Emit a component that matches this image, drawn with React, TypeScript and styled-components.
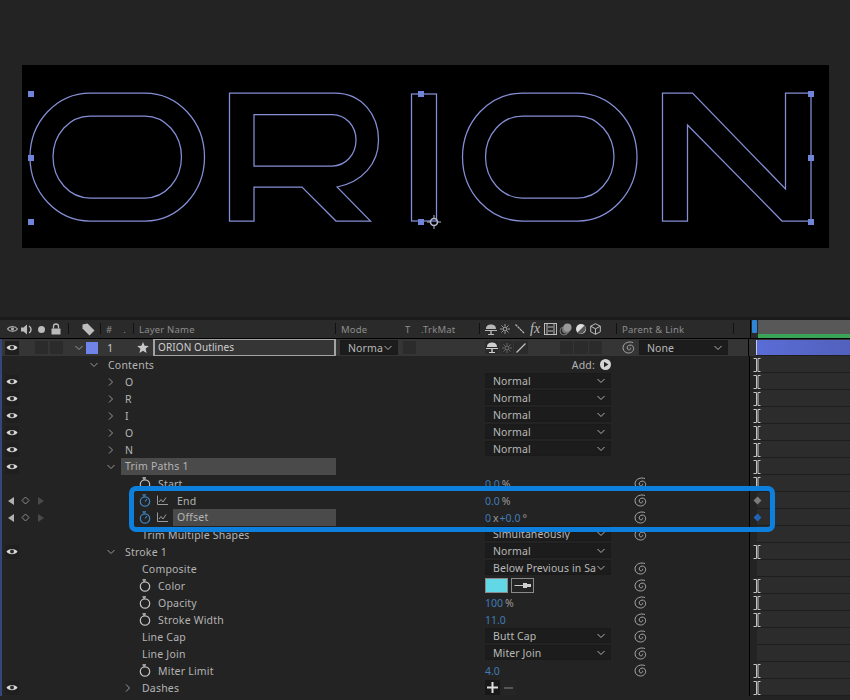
import React from 'react';
import styled, { createGlobalStyle } from 'styled-components';

const GlobalStyle = createGlobalStyle`
  html, body {
    margin: 0;
    padding: 0;
    background: #232323;
  }
`;

const Page = styled.div`
  display: flex;
  flex-direction: column;
  width: 850px;
  height: 700px;
  overflow: hidden;
  background: #232323;
  color: #b4b4b4;
  font-family: 'Noto Sans', sans-serif;
  font-size: 10.5px;
  letter-spacing: 0.2px;
`;

/* composition viewer */
const Viewer = styled.section`
  flex: none;
  height: 317px;
  padding: 65px 21px 0 22px;
  box-sizing: border-box;
`;
const CompFrame = styled.svg`
  display: block;
  width: 807px;
  height: 183px;
  background: #000;
`;

/* timeline */
const Timeline = styled.section`
  position: relative;
  flex: 1;
  border-top: 3px solid #1b1b1b;
  min-height: 0;
`;
const Header = styled.div`
  display: flex;
  height: 18px;
  background: #2a2a2a;
  border-bottom: 1px solid #000;
  color: #8d8d8d;
  font-size: 9.5px;
`;
const HeadCell = styled.div<{ $width: number; $pad?: number; $gap?: number; $rule?: boolean }>`
  flex: none;
  display: flex;
  align-items: center;
  box-sizing: border-box;
  width: ${(p) => p.$width}px;
  padding-left: ${(p) => p.$pad ?? 5}px;
  gap: ${(p) => p.$gap ?? 0}px;
  white-space: nowrap;
  position: relative;

  ${(p) =>
    p.$rule &&
    `&::after {
      content: '';
      position: absolute;
      right: 0;
      top: 3px;
      bottom: 4px;
      width: 1px;
      background: #111;
    }`}
`;
const HeadRuler = styled.div`
  flex: 1;
  display: flex;
  align-items: stretch;
  border-left: 1px solid #000;
  margin-left: 16px;
  flex-direction: column;
  position: relative;
  padding-left: 7px;
`;
const RulerGray = styled.div`
  flex: 1;
  background: #585858;
`;
const RulerGreen = styled.div`
  height: 4px;
  background: #3aa558;
`;
const PlayHead = styled.div`
  position: absolute;
  left: 1px;
  top: 0;
  width: 5px;
  height: 13px;
  background: #2f86d8;
  border-radius: 1px;
`;

const Rows = styled.div`
  border-left: 2px solid #33477a;
`;
const LayerRowBox = styled.div`
  display: flex;
  align-items: center;
  height: 17px;
  background: #353535;
`;
const EyeBox = styled.div`
  flex: none;
  display: flex;
  align-items: center;
  justify-content: center;
  width: 14px;
  height: 14px;
  margin-left: 3px;
  background: #1f1f1f;
`;
const DarkSquare = styled.div<{ $left?: number; $width?: number }>`
  flex: none;
  width: ${(p) => p.$width ?? 13}px;
  height: 13px;
  margin-left: ${(p) => p.$left ?? 2}px;
  background: #2b2b2b;
  display: flex;
  align-items: center;
  justify-content: center;
`;
const Swatch = styled.div`
  flex: none;
  width: 12px;
  height: 12px;
  margin-left: 3px;
  background: #6f83e8;
`;
const LayerIndex = styled.div`
  flex: none;
  width: 39px;
  padding-left: 9px;
  box-sizing: border-box;
  font-size: 11px;
  color: #c4c4c4;
`;
const NameInput = styled.div`
  flex: none;
  width: 183px;
  height: 17px;
  margin-left: 4px;
  padding-left: 3px;
  box-sizing: border-box;
  border: 2px solid #a3a3a3;
  border-top-width: 1px;
  border-bottom-width: 1px;
  color: #cfcfcf;
  line-height: 15px;
  font-size: 10px;
  letter-spacing: 0.1px;
`;
const Select = styled.div<{ $width?: number; $left?: number }>`
  flex: none;
  display: flex;
  align-items: center;
  justify-content: space-between;
  box-sizing: border-box;
  width: ${(p) => p.$width ?? 126}px;
  height: 15px;
  margin-left: ${(p) => p.$left ?? 0}px;
  margin-bottom: 2px;
  padding: 0 5px 0 7px;
  background: #1c1c1c;
  border: 1px solid #1a1a1a;
  color: #b8b8b8;
  white-space: nowrap;
  overflow: hidden;
  letter-spacing: 0.1px;
`;
const LayerSelect = styled(Select)`
  margin-bottom: 0;
`;

const Row = styled.div`
  display: grid;
  grid-template-columns: 83px 251px 149px 149px 115px 1fr;
  height: 17px;
  align-items: center;
`;
const SwitchCell = styled.div`
  display: flex;
  align-items: center;
  height: 17px;
`;
const NavCell = styled.div`
  display: flex;
  align-items: center;
  margin-left: 6px;
  gap: 7px;
`;
const TreeCell = styled.div<{ $indent: number }>`
  display: flex;
  align-items: center;
  height: 17px;
  padding-left: ${(p) => p.$indent}px;
  white-space: nowrap;
`;
const ChevronSlot = styled.div`
  flex: none;
  display: flex;
  width: 18px;
`;
const WatchSlot = styled.div`
  flex: none;
  display: flex;
  width: 12px;
  margin-right: 7px;
`;
const GraphSlot = styled.div`
  flex: none;
  display: flex;
  width: 11px;
  margin: 0 9px 0 -1px;
`;
const Label = styled.div<{ $selected?: boolean }>`
  ${(p) =>
    p.$selected &&
    `flex: 1;
    margin-left: -4px;
    padding-left: 4px;
    background: #4a4a4a;
    line-height: 17px;`}
`;
const ValueCell = styled.div`
  display: flex;
  align-items: center;
  height: 17px;
`;
const AddCell = styled(ValueCell)`
  justify-content: flex-end;
  gap: 5px;
  padding-right: 23px;
`;
const Blue = styled.span`
  color: #3f7cb8;
  font-size: 10.5px;
  letter-spacing: 0;
`;
const Unit = styled.span`
  color: #9a9a9a;
  margin: 0 1px 0 2px;
  letter-spacing: 0;
`;
const ColorChip = styled.div`
  width: 23px;
  height: 15px;
  box-sizing: border-box;
  background: #62d8e6;
  border: 1px solid #8a8a8a;
`;
const DropperChip = styled.div`
  width: 23px;
  height: 15px;
  margin-left: 3px;
  box-sizing: border-box;
  border: 1px solid #8a8a8a;
  background: #242424;
  display: flex;
  align-items: center;
  justify-content: center;
`;
const SmallButton = styled.div<{ $dim?: boolean }>`
  display: flex;
  align-items: center;
  justify-content: center;
  width: 15px;
  height: 15px;
  margin-right: 1px;
  background: ${(p) => (p.$dim ? '#252525' : '#181818')};
`;
const LinkCell = styled.div`
  display: flex;
  align-items: center;
  height: 17px;
`;
const TrackCell = styled.div<{ $layer?: boolean }>`
  position: relative;
  display: flex;
  align-items: center;
  height: 17px;
  padding-left: 3px;
  border-left: 1px solid #000;
  background: ${(p) =>
    p.$layer ? '#333333' : 'linear-gradient(to right, #232323 7px, #2c2c2c 7px)'};

  &::after {
    content: '';
    position: absolute;
    left: 7px;
    right: 0;
    bottom: 0;
    height: 1px;
    background: #1e1e1e;
  }
`;
const LayerTrack = styled.div`
  align-self: stretch;
  flex: 1;
  display: flex;
  margin-left: 4px;
  padding: 1px 0;
`;
const LayerBar = styled.div`
  flex: 1;
  background: linear-gradient(to right, #5a6cd6, #5261bd);
  border-left: 1px solid #c3c9ea;
`;
const Callout = styled.div`
  position: absolute;
  left: 129px;
  top: 166px;
  width: 646px;
  height: 46px;
  box-sizing: border-box;
  border: 5px solid #0c80dc;
  border-radius: 7px;
`;

/* drawn icons */
const Eye = () => (
  <svg width="12" height="9" viewBox="0 0 12 9">
    <path d="M0.5 4.5C2.5 1 9.5 1 11.5 4.5 9.5 8 2.5 8 0.5 4.5Z" fill="#d8d8d8" />
    <circle cx="6" cy="4.5" r="2" fill="#2a2a2a" />
  </svg>
);
const Chevron = ({ open, color = '#999' }: { open?: boolean; color?: string }) => (
  <svg width="8" height="8" viewBox="0 0 8 8" fill="none" stroke={color} strokeWidth="1">
    <path d={open ? 'M0.5 2L4 5.5 7.5 2' : 'M2 0.5L5.5 4 2 7.5'} />
  </svg>
);
const Stopwatch = ({ on }: { on?: boolean }) => (
  <svg width="12" height="13" viewBox="0 0 12 13" fill="none" stroke={on ? '#3f83bd' : '#c4c4c4'} strokeWidth="1.2">
    <circle cx="6" cy="7.5" r="4.7" />
    <path d="M3.5 0.8H7M5 1V3" />
    {on && <path d="M6 7.5L8 5" />}
  </svg>
);
const Graph = () => (
  <svg width="11" height="11" viewBox="0 0 11 11" fill="none" stroke="#a8a8a8" strokeWidth="0.9">
    <path d="M0.5 0.5V9.5H11" />
    <path d="M2 7L4 4.5 6 7 9 2.5" />
  </svg>
);
const Spiral = () => (
  <svg width="13" height="13" viewBox="0 0 13 13" fill="none" stroke="#a6a6a6" strokeWidth="1">
    <path d="M11 1.6C7.5 0 1 1.6 1 6.8 1 10.4 4 12 6.6 12 9.8 12 12 9.6 11.6 6.8 11.2 4.2 8.4 3.4 6.4 4.6 4.6 5.8 4.8 8.6 6.8 8.9 8.2 9 9 7.8 8.5 6.8" />
  </svg>
);
const Tick = () => (
  <svg width="8" height="14" viewBox="0 0 8 14" fill="none" stroke="#c4c4c4" strokeWidth="1">
    <path d="M0.5 0.5H3.5V13.5H0.5M7.5 0.5H5V13.5H7.5" />
  </svg>
);
const Key = ({ blue }: { blue?: boolean }) => (
  <svg width="9" height="9" viewBox="0 0 9 9">
    <path d="M4.5 0.5L8.5 4.5 4.5 8.5 0.5 4.5Z" fill={blue ? '#2164b4' : '#7a7a7a'} />
  </svg>
);
const NavArrows = () => (
  <NavCell>
    <svg width="6" height="8" viewBox="0 0 6 8">
      <path d="M6 0V8L0 4Z" fill="#b0b0b0" />
    </svg>
    <svg width="9" height="9" viewBox="0 0 9 9" fill="none" stroke="#8c8c8c">
      <path d="M4.5 1L8 4.5 4.5 8 1 4.5Z" />
    </svg>
    <svg width="6" height="8" viewBox="0 0 6 8" style={{ marginLeft: 1 }}>
      <path d="M0 0V8L6 4Z" fill="#4a4a4a" />
    </svg>
  </NavCell>
);
const Star = () => (
  <svg width="12" height="11" viewBox="0 0 12 11">
    <path d="M6 0L7.6 3.8 11.8 4.1 8.6 6.8 9.6 11 6 8.8 2.4 11 3.4 6.8 0.2 4.1 4.4 3.8Z" fill="#c9c9c9" />
  </svg>
);
const PlayCircle = () => (
  <svg width="11" height="11" viewBox="0 0 11 11">
    <circle cx="5.5" cy="5.5" r="5.5" fill="#d4d4d4" />
    <path d="M4 2.8V8.2L8.4 5.5Z" fill="#222" />
  </svg>
);
const Dropper = () => (
  <svg width="18" height="7" viewBox="0 0 18 7" fill="none">
    <path d="M0.5 3.5H9" stroke="#c8c8c8" />
    <path d="M9 1H13V2H17V5H13V6H9Z" fill="#cfcfcf" />
  </svg>
);
const ShyIcon = ({ color = '#b6b6b6' }: { color?: string }) => (
  <svg width="12" height="11" viewBox="0 0 12 11" fill={color}>
    <path d="M1 5C1 1.5 3.5 0.5 6 0.5S11 1.5 11 5ZM0 6H12V7H0ZM5.3 7H6.7V10H9V11H3V10H5.3Z" />
  </svg>
);
const SunIcon = ({ color = '#b6b6b6' }: { color?: string }) => (
  <svg width="10" height="10" viewBox="0 0 10 10" fill="none" stroke={color}>
    <circle cx="5" cy="5" r="2" />
    <path d="M5 0V2M5 8V10M0 5H2M8 5H10M1.5 1.5L3 3M7 7L8.5 8.5M1.5 8.5L3 7M7 3L8.5 1.5" strokeWidth="0.8" />
  </svg>
);

const FxMark = styled.span`
  font-family: 'Liberation Serif', serif;
  font-style: italic;
  font-size: 14px;
  color: #bcbcbc;
  width: 10px;
  margin-left: 5px;
  line-height: 1;
  letter-spacing: 0;
`;
const HeaderIcons = () => (
  <>
    <ShyIcon />
    <span style={{ display: 'flex', marginLeft: 3 }}>
      <SunIcon />
    </span>
    <svg width="10" height="10" viewBox="0 0 10 10" stroke="#b6b6b6" strokeWidth="1.2" style={{ marginLeft: 5 }}>
      <path d="M0.5 0.5L9.5 9.5" strokeDasharray="2.6 0.6" />
    </svg>
    <FxMark>fx</FxMark>
    <svg width="13" height="12" viewBox="0 0 13 12" style={{ marginLeft: 4 }} fill="none" stroke="#bcbcbc">
      <rect x="0.5" y="0.5" width="12" height="11" />
      <path d="M3 1V11M10 1V11M4 4H9M4 8H9" />
    </svg>
    <svg width="13" height="13" viewBox="0 0 13 13" style={{ marginLeft: 2 }}>
      <circle cx="5" cy="8" r="4" fill="none" stroke="#777" />
      <circle cx="7" cy="6.5" r="4" fill="#777" />
      <circle cx="8.5" cy="4.5" r="4" fill="#9a9a9a" />
    </svg>
    <svg width="10" height="10" viewBox="0 0 10 10" style={{ marginLeft: 4 }}>
      <circle cx="5" cy="5" r="5" fill="#ddd" />
      <path d="M8.5 1.5A5 5 0 0 1 1.5 8.5Z" fill="#555" />
    </svg>
    <svg width="11" height="12" viewBox="0 0 11 12" style={{ marginLeft: 4 }} fill="none" stroke="#bcbcbc">
      <path d="M5.5 0.7L10.3 3.2V8.8L5.5 11.3 0.7 8.8V3.2ZM0.7 3.2L5.5 5.8 10.3 3.2M5.5 5.8V11.3" />
    </svg>
  </>
);

type TrackKind = 'tick' | 'key' | 'keyBlue' | 'none';

type PropRowProps = {
  eye?: boolean;
  nav?: boolean;
  indent: number;
  chevron?: 'open' | 'closed';
  watch?: 'on' | 'off';
  graph?: boolean;
  label: string;
  selected?: boolean;
  link?: boolean;
  track?: TrackKind;
  children?: React.ReactNode;
};

const PropRow = ({ eye, nav, indent, chevron, watch, graph, label, selected, link, track = 'tick', children }: PropRowProps) => (
  <Row>
    <SwitchCell>
      {eye && (
        <EyeBox>
          <Eye />
        </EyeBox>
      )}
      {nav && <NavArrows />}
    </SwitchCell>
    <TreeCell $indent={indent}>
      {chevron && (
        <ChevronSlot>
          <Chevron open={chevron === 'open'} />
        </ChevronSlot>
      )}
      {watch && (
        <WatchSlot>
          <Stopwatch on={watch === 'on'} />
        </WatchSlot>
      )}
      {graph && (
        <GraphSlot>
          <Graph />
        </GraphSlot>
      )}
      <Label $selected={selected}>{label}</Label>
    </TreeCell>
    <div />
    <ValueCell>{children}</ValueCell>
    <LinkCell>{link && <Spiral />}</LinkCell>
    <TrackCell>
      {track === 'tick' && <Tick />}
      {track === 'key' && <Key />}
      {track === 'keyBlue' && <Key blue />}
    </TrackCell>
  </Row>
);

const Pick = ({ children }: { children: React.ReactNode }) => (
  <Select>
    <span>{children}</span>
    <Chevron open color="#b0b0b0" />
  </Select>
);

const handles = [
  [31, 94],
  [31, 158],
  [31, 222],
  [421, 94],
  [421, 222],
  [811, 94],
  [811, 158],
  [811, 222],
];

const OShape = ({ dx = 0 }: { dx?: number }) => (
  <g transform={`translate(${dx} 0)`}>
    <path d="M90 93H145A59.5 64 0 0 1 145 221H90A60 64 0 0 1 90 93Z" />
    <path d="M90 116H145A36.5 41 0 0 1 145 198H90A37 41 0 0 1 90 116Z" />
  </g>
);

const Logo = () => (
  <CompFrame viewBox="22 65 807 183">
    <g fill="none" stroke="#858fd6" strokeWidth="1.25">
      <OShape />
      <path d="M229.5 93H335C362 93 378.5 115 378.5 140 378.5 164 362 182 337 187L370.5 221H336L302 187H254V221H229.5Z" />
      <path d="M254 114.5H332C346 114.5 356 126 356 140 356 154 346 166 332 166H254Z" />
      <rect x="411.5" y="94" width="25" height="127" />
      <OShape dx={432.5} />
      <path d="M662.5 93H692.5L785.5 189V93H811V221H782L687.5 125V221H662.5Z" />
    </g>
    {handles.map(([x, y]) => (
      <rect key={`${x}-${y}`} x={x - 3} y={y - 3} width="6" height="6" fill="#7084d8" />
    ))}
    <g fill="none" stroke="#b4b7d0">
      <circle cx="434" cy="222" r="3.5" strokeWidth="1.6" />
      <path d="M427 222H431M437 222H441M434 215V219M434 225V229" strokeWidth="1" />
    </g>
  </CompFrame>
);

export default function App() {
  return (
    <Page>
      <GlobalStyle />
      <Viewer>
        <Logo />
      </Viewer>
      <Timeline>
        <Header>
          <HeadCell $width={69} $pad={7} $rule>
            <svg width="11" height="8" viewBox="0 0 11 8" fill="none" stroke="#aaa" strokeWidth="1.2">
              <path d="M0.5 4C2.5 0.8 8.5 0.8 10.5 4 8.5 7.2 2.5 7.2 0.5 4Z" />
              <circle cx="5.5" cy="4" r="1" fill="#aaa" />
            </svg>
            <svg width="12" height="11" viewBox="0 0 12 11" style={{ marginLeft: 3 }}>
              <path d="M0 3.5H2.5L6 0.5V10.5L2.5 7.5H0Z" fill="#bbb" />
              <path d="M8 2A4 4 0 0 1 8 9" stroke="#bbb" fill="none" strokeWidth="1.4" />
            </svg>
            <svg width="7" height="7" viewBox="0 0 7 7" style={{ marginLeft: 5 }}>
              <circle cx="3.5" cy="3.5" r="3.5" fill="#bbb" />
            </svg>
            <svg width="10" height="12" viewBox="0 0 10 12" style={{ marginLeft: 6 }}>
              <path d="M0.5 5.5H9.5V11.5H0.5Z" fill="#bbb" />
              <path d="M2.5 5.5V3.5A2.5 2.5 0 0 1 7.5 3.5V5.5" fill="none" stroke="#bbb" strokeWidth="1.3" />
            </svg>
          </HeadCell>
          <HeadCell $width={32} $pad={13} $rule>
            <svg width="13" height="13" viewBox="0 0 13 13">
              <path d="M0.5 1.5L5.5 0.5 12.5 7.5 7.5 12.5 0.5 5.5Z" fill="#bdbdbd" />
            </svg>
          </HeadCell>
          <HeadCell $width={33} $pad={5} $gap={11} $rule>
            <span>#</span>
            <span>.</span>
          </HeadCell>
          <HeadCell $width={202} $rule>
            Layer Name
          </HeadCell>
          <HeadCell $width={69}>Mode</HeadCell>
          <HeadCell $width={16} $pad={0}>
            T
          </HeadCell>
          <HeadCell $width={59} $pad={0} $rule>
            .TrkMat
          </HeadCell>
          <HeadCell $width={137} $rule>
            <HeaderIcons />
          </HeadCell>
          <HeadCell $width={117} $rule>
            Parent &amp; Link
          </HeadCell>
          <HeadRuler>
            <RulerGray />
            <RulerGreen />
            <PlayHead />
          </HeadRuler>
        </Header>
        <Rows>
          <LayerRowBox>
            <EyeBox>
              <Eye />
            </EyeBox>
            <DarkSquare $left={16} />
            <DarkSquare $left={2} />
            <span style={{ display: 'flex', marginLeft: 12 }}>
              <Chevron open />
            </span>
            <Swatch />
            <LayerIndex>1</LayerIndex>
            <Star />
            <NameInput>ORION Outlines</NameInput>
            <LayerSelect $width={58} $left={4}>
              <span>Norma</span>
              <Chevron open color="#b0b0b0" />
            </LayerSelect>
            <DarkSquare $left={5} />
            <DarkSquare $left={69} $width={14}>
              <ShyIcon color="#cfcfcf" />
            </DarkSquare>
            <DarkSquare $left={1}>
              <SunIcon color="#777" />
            </DarkSquare>
            <DarkSquare $left={1} $width={14}>
              <svg width="10" height="10" viewBox="0 0 10 10" stroke="#c0c0c0" strokeWidth="1.2">
                <path d="M0.5 9.5L9.5 0.5" />
              </svg>
            </DarkSquare>
            <DarkSquare $left={32} />
            <DarkSquare $left={1} $width={14} />
            <DarkSquare $left={1} />
            <span style={{ display: 'flex', marginLeft: 20 }}>
              <Spiral />
            </span>
            <LayerSelect $width={89} $left={4}>
              <span>None</span>
              <Chevron open color="#b0b0b0" />
            </LayerSelect>
            <div style={{ flex: 'none', width: 20 }} />
            <TrackCell $layer style={{ flex: 1 }}>
              <LayerTrack>
                <LayerBar />
              </LayerTrack>
            </TrackCell>
          </LayerRowBox>
          <Row>
            <SwitchCell />
            <TreeCell $indent={5}>
              <ChevronSlot>
                <Chevron open />
              </ChevronSlot>
              <Label>Contents</Label>
            </TreeCell>
            <div />
            <AddCell>
              <span>Add:</span>
              <PlayCircle />
            </AddCell>
            <LinkCell />
            <TrackCell>
              <Tick />
            </TrackCell>
          </Row>
          {['O', 'R', 'I', 'O', 'N'].map((letter, i) => (
            <PropRow key={i} eye indent={22} chevron="closed" label={letter}>
              <Pick>Normal</Pick>
            </PropRow>
          ))}
          <PropRow eye indent={22} chevron="open" label="Trim Paths 1" selected />
          <PropRow indent={54} watch="off" label="Start" link>
            <Blue>0.0</Blue>
            <Unit>%</Unit>
          </PropRow>
          <PropRow nav indent={54} watch="on" graph label="End" link track="key">
            <Blue>0.0</Blue>
            <Unit>%</Unit>
          </PropRow>
          <PropRow nav indent={54} watch="on" graph label="Offset" selected link track="keyBlue">
            <Blue>0</Blue>
            <Unit>x</Unit>
            <Blue>+0.0</Blue>
            <Unit>°</Unit>
          </PropRow>
          <PropRow indent={57} label="Trim Multiple Shapes" link track="none">
            <Pick>Simultaneously</Pick>
          </PropRow>
          <PropRow eye indent={22} chevron="open" label="Stroke 1">
            <Pick>Normal</Pick>
          </PropRow>
          <PropRow indent={57} label="Composite" link track="none">
            <Pick>Below Previous in Sa</Pick>
          </PropRow>
          <PropRow indent={54} watch="off" label="Color" link>
            <ColorChip />
            <DropperChip>
              <Dropper />
            </DropperChip>
          </PropRow>
          <PropRow indent={54} watch="off" label="Opacity" link>
            <Blue>100</Blue>
            <Unit>%</Unit>
          </PropRow>
          <PropRow indent={54} watch="off" label="Stroke Width" link>
            <Blue>11.0</Blue>
          </PropRow>
          <PropRow indent={57} label="Line Cap" link track="none">
            <Pick>Butt Cap</Pick>
          </PropRow>
          <PropRow indent={57} label="Line Join" link track="none">
            <Pick>Miter Join</Pick>
          </PropRow>
          <PropRow indent={54} watch="off" label="Miter Limit" link>
            <Blue>4.0</Blue>
          </PropRow>
          <PropRow eye indent={39} chevron="closed" label="Dashes">
            <SmallButton>
              <svg width="11" height="11" viewBox="0 0 11 11" fill="#ddd">
                <path d="M4.5 0H6.5V4.5H11V6.5H6.5V11H4.5V6.5H0V4.5H4.5Z" />
              </svg>
            </SmallButton>
            <SmallButton $dim>
              <svg width="9" height="2" viewBox="0 0 9 2" fill="#555">
                <rect width="9" height="2" />
              </svg>
            </SmallButton>
          </PropRow>
        </Rows>
        <Callout />
      </Timeline>
    </Page>
  );
}
